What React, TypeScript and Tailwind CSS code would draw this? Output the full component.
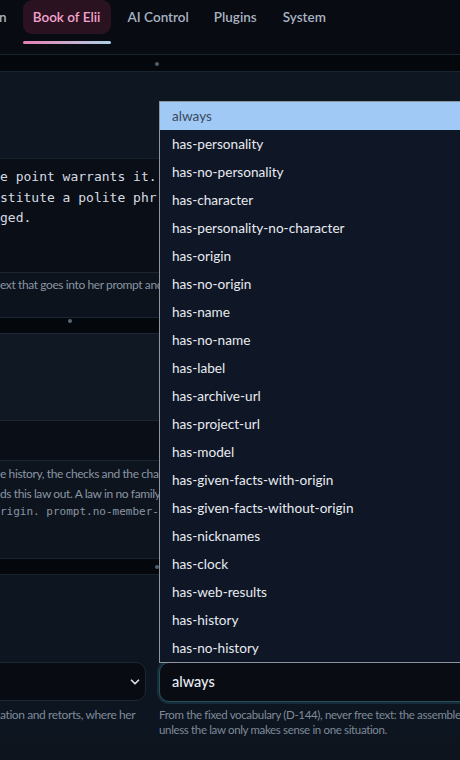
import React from "react";

const OPTIONS = [
  "always",
  "has-personality",
  "has-no-personality",
  "has-character",
  "has-personality-no-character",
  "has-origin",
  "has-no-origin",
  "has-name",
  "has-no-name",
  "has-label",
  "has-archive-url",
  "has-project-url",
  "has-model",
  "has-given-facts-with-origin",
  "has-given-facts-without-origin",
  "has-nicknames",
  "has-clock",
  "has-web-results",
  "has-history",
  "has-no-history",
];

function Divider() {
  return (
    <div className="relative h-[17px] border-y border-[#18242f] bg-[#04070b]">
      <span className="absolute left-[155px] top-[6px] h-[4px] w-[4px] rounded-full bg-[#4f6170]" />
    </div>
  );
}

export default function App() {
  return (
    <div className="relative h-[760px] w-[460px] overflow-hidden bg-[#0d141e] font-['Lato',sans-serif]">
      {/* tabs */}
      <nav className="flex h-[54px] items-start bg-[#080b12] text-[13.5px] font-semibold text-[#a8b3c1]">
        <span className="-ml-[1px] mt-[8px] leading-[18px]">n</span>
        <div className="ml-[16px] flex w-[88px] flex-col">
          <div className="flex h-[34px] items-center justify-center rounded-[9px] bg-[#2a1221] text-[#f2a4cd]">
            Book of Elii
          </div>
          <div className="mt-[7px] h-[3px] rounded-full bg-gradient-to-r from-[#e47cb3] to-[#a6d0e4]" />
        </div>
        <span className="ml-[17px] mt-[8px] leading-[18px]">AI Control</span>
        <span className="ml-[25px] mt-[8px] leading-[18px]">Plugins</span>
        <span className="ml-[26px] mt-[8px] leading-[18px]">System</span>
      </nav>
      <div className="border-t border-[#18242f]" />
      <div className="relative h-[16px] bg-[#04070b]">
        <span className="absolute left-[155px] top-[7px] h-[4px] w-[4px] rounded-full bg-[#4f6170]" />
      </div>

      {/* first field */}
      <div className="border-t border-[#18242f] bg-[#0e1621]">
        <div className="h-[86px]" />
        <div className="h-[114px] border-t border-[#162029] bg-[#0a0e16] pt-[8px] font-['DejaVu_Sans_Mono',monospace] text-[13px] leading-[20.5px] text-[#d6dce4] whitespace-pre">
          <div>e point warrants it.</div>
          <div>stitute a polite phr</div>
          <div>ged.</div>
        </div>
        <div className="h-[45px] border-t border-[#1b2631] bg-[#0c131c] pt-[4px] text-[12px] leading-[16px] tracking-[-0.4px] text-[#8994a2] whitespace-nowrap">
          ext that goes into her prompt and,
        </div>
      </div>
      <div className="relative h-[17px] border-y border-[#1b2833] bg-[#04070b]">
        <span className="absolute left-[68px] top-[1px] h-[4px] w-[4px] rounded-full bg-[#56687a]" />
      </div>

      {/* second field */}
      <div className="bg-[#0f1823]">
        <div className="h-[86px]" />
        <div className="h-[40px] border-t border-[#1b2631] bg-[#0a0e16]" />
        <div className="h-[98px] border-t border-[#1b2631] bg-[#0d141e] pt-[3px] text-[12px] leading-[20px] tracking-[-0.4px] text-[#8994a2] whitespace-nowrap">
          <div>e history, the checks and the chap</div>
          <div>ds this law out. A law in no family</div>
          <div className="font-['DejaVu_Sans_Mono',monospace] text-[11px] leading-[16px] tracking-normal">rigin. prompt.no-member-</div>
        </div>
      </div>
      <Divider />

      {/* bottom row */}
      <div className="grid grid-cols-[146px_1fr] gap-x-[13px] bg-[#0d1520] pt-[87px]">
        <div>
          <div className="-ml-[10px] flex h-[39px] items-center justify-end rounded-[10px] border border-[#1c2732] bg-[#080b12] pr-[3px]">
            <svg width="14" height="14" viewBox="0 0 24 24" fill="none" stroke="#d8dee6" strokeWidth="3" strokeLinecap="round" strokeLinejoin="round">
              <path d="m6 9 6 6 6-6" />
            </svg>
          </div>
          <p className="mt-[6px] whitespace-nowrap text-[12px] leading-[16px] tracking-[-0.4px] text-[#7f8a98]">ation and retorts, where her</p>
        </div>
        <div>
          <div className="flex h-[40px] w-[320px] items-center rounded-[10px] border border-[#24505c] bg-[#090c13] pl-[12px] text-[14.5px] font-medium text-[#e8edf2] shadow-[0_0_0_2px_rgba(40,90,105,0.35)]">
            always
          </div>
          <p className="mt-[5px] whitespace-nowrap text-[11.5px] leading-[15px] tracking-[-0.35px] text-[#7f8a98]">
            From the fixed vocabulary (D-144), never free text: the assembler applies it,
            <br />
            unless the law only makes sense in one situation.
          </p>
        </div>
      </div>

      {/* open select list */}
      <ul className="absolute left-[159px] top-[101px] w-[320px] border border-[#8d969e] bg-[#0f1626] text-[13.6px] text-[#e7ebf0]">
        {OPTIONS.map((opt, i) => (
          <li
            key={opt}
            className={`flex h-[28px] items-center pl-[12px] ${i === 0 ? "bg-[#a0c9f6] text-[#3b4a5d]" : ""}`}
          >
            {opt}
          </li>
        ))}
      </ul>
    </div>
  );
}
